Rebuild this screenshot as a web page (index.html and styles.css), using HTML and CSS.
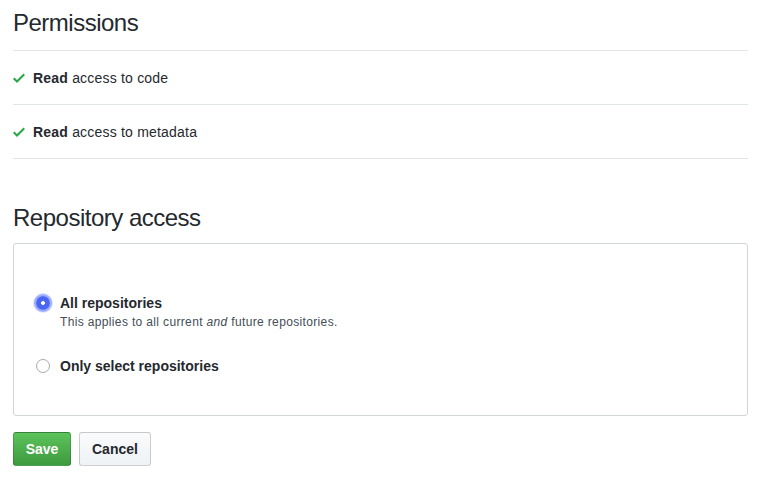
FILE: index.html
```html
<!DOCTYPE html>
<html>
<head>
<meta charset="utf-8">
<link rel="stylesheet" href="styles.css">
</head>
<body>
<div class="page">
  <h2 class="heading">Permissions</h2>
  <ul class="perm-list">
    <li class="perm">
      <svg class="check" width="12" height="16" viewBox="0 0 12 16"><path fill-rule="evenodd" d="M12 5l-8 8-4-4 1.5-1.5L4 10l6.5-6.5L12 5z"/></svg>
      <span><strong>Read</strong> access to code</span>
    </li>
    <li class="perm">
      <svg class="check" width="12" height="16" viewBox="0 0 12 16"><path fill-rule="evenodd" d="M12 5l-8 8-4-4 1.5-1.5L4 10l6.5-6.5L12 5z"/></svg>
      <span><strong>Read</strong> access to metadata</span>
    </li>
  </ul>

  <h2 class="heading heading-repo">Repository access</h2>
  <div class="box">
    <div class="option">
      <span class="radio radio-on"></span>
      <div class="option-text">
        <div class="option-label">All repositories</div>
        <div class="option-note">This applies to all current <em>and</em> future repositories.</div>
      </div>
    </div>
    <div class="option option-2">
      <span class="radio"></span>
      <div class="option-text">
        <div class="option-label">Only select repositories</div>
      </div>
    </div>
  </div>

  <div class="actions">
    <button class="btn btn-primary">Save</button>
    <button class="btn">Cancel</button>
  </div>
</div>
</body>
</html>
```

FILE: styles.css
```css
* { box-sizing: border-box; }
html, body { margin: 0; padding: 0; background: #fff; }
body {
  font-family: "Liberation Sans", Arial, sans-serif;
  color: #24292e;
  font-size: 14px;
  line-height: 1.5;
}
.page {
  width: 735px;
  margin-left: 13px;
}
.heading {
  margin: 0;
  font-size: 24px;
  font-weight: 400;
  letter-spacing: -0.5px;
  line-height: 36px;
  padding: 5px 0 9px;
  border-bottom: 1px solid #e1e4e8;
}
.heading-repo {
  border-bottom: 0;
  padding: 0;
  margin-top: 41px;
  margin-bottom: 7px;
}
.perm-list {
  list-style: none;
  margin: 0;
  padding: 0;
}
.perm {
  display: flex;
  align-items: center;
  gap: 8px;
  height: 54px;
  padding-top: 1px;
  border-bottom: 1px solid #e1e4e8;
  letter-spacing: 0.2px;
}
.check { fill: #28a745; flex: none; }
.box {
  border: 1px solid #d1d5da;
  border-radius: 3px;
  height: 173px;
  padding: 49px 22px 0;
}
.option {
  display: flex;
  align-items: flex-start;
  gap: 10px;
}
.option-2 { margin-top: 25px; }
.radio {
  flex: none;
  width: 14px;
  height: 14px;
  margin-top: 3px;
  border-radius: 50%;
  border: 1px solid #a8a8a8;
  background: #fff;
}
.radio-on {
  border: 0;
  background: radial-gradient(circle, #fff 0 1.6px, #4a66f4 2.2px);
  box-shadow: 0 0 0 2px rgba(90, 120, 245, 0.5), 0 0 0 3px rgba(90, 120, 245, 0.2);
}
.option-label {
  font-weight: 700;
  font-size: 14px;
  line-height: 20px;
}
.option-note {
  font-size: 12px;
  letter-spacing: 0.35px;
  line-height: 18px;
  color: #444d56;
}
.actions {
  display: flex;
  gap: 8px;
  margin-top: 16px;
}
.btn {
  font-family: inherit;
  font-size: 14px;
  font-weight: 700;
  line-height: 20px;
  padding: 6px 12px;
  height: 34px;
  border: 1px solid rgba(27, 31, 35, 0.2);
  border-radius: 3px;
  color: #24292e;
  background: linear-gradient(-180deg, #fafbfc 0%, #eff3f6 90%);
}
.btn-primary {
  color: #fff;
  width: 58px;
  padding: 6px 0;
  background: linear-gradient(-180deg, #5cc35b 0%, #3e9a3f 100%);
}
```
